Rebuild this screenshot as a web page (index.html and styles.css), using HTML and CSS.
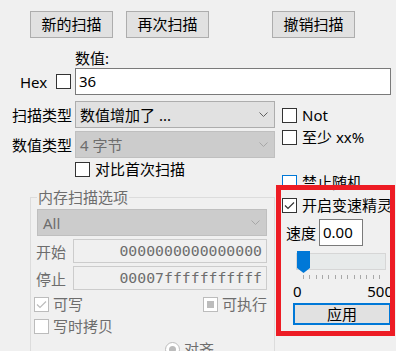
FILE: index.html
```html
<!DOCTYPE html>
<html lang="zh">

<head>
  <meta charset="UTF-8">
  <title>扫描</title>
  <link rel="stylesheet" href="styles.css">
</head>

<body>
  <div class="form">
    <div class="toolbar">
      <button class="btn">新的扫描</button>
      <button class="btn">再次扫描</button>
      <button class="btn btn-undo">撤销扫描</button>
    </div>

    <div class="value-label">数值:</div>
    <div class="value-row">
      <span class="hex-label">Hex</span>
      <span class="check"></span>
      <div class="edit value-edit">36</div>
    </div>

    <div class="columns">
      <div class="col-left">
        <div class="field-row">
          <span class="field-label">扫描类型</span>
          <div class="combo">
            <span>数值增加了 ...</span>
            <svg class="arrow" width="9" height="5" viewBox="0 0 9 5"><polyline points="0.5,0.5 4.5,4.5 8.5,0.5" /></svg>
          </div>
        </div>
        <div class="field-row">
          <span class="field-label">数值类型</span>
          <div class="combo disabled">
            <span>4 字节</span>
            <svg class="arrow" width="9" height="5" viewBox="0 0 9 5"><polyline points="0.5,0.5 4.5,4.5 8.5,0.5" /></svg>
          </div>
        </div>
        <div class="cb first-scan"><span class="check"></span>对比首次扫描</div>

        <fieldset class="group">
          <legend>内存扫描选项</legend>
          <div class="combo disabled combo-all">
            <span>All</span>
            <svg class="arrow" width="9" height="5" viewBox="0 0 9 5"><polyline points="0.5,0.5 4.5,4.5 8.5,0.5" /></svg>
          </div>
          <div class="addr-row">
            <span class="addr-label">开始</span>
            <div class="addr-edit">0000000000000000</div>
          </div>
          <div class="addr-row">
            <span class="addr-label">停止</span>
            <div class="addr-edit">00007fffffffffff</div>
          </div>
          <div class="opt-row">
            <div class="cb off cb-wide">
              <span class="check">
                <svg width="13" height="13" viewBox="0 0 13 13"><polyline points="2,6.5 5,9.5 11,3.5" /></svg>
              </span>可写
            </div>
            <div class="cb off"><span class="check mixed"></span>可执行</div>
          </div>
          <div class="opt-row">
            <div class="cb off"><span class="check"></span>写时拷贝</div>
          </div>
          <div class="radio-row"><span class="radio"></span>对齐</div>
        </fieldset>
      </div>

      <div class="col-right">
        <div class="cb opt-not"><span class="check"></span>Not</div>
        <div class="cb opt-least"><span class="check"></span>至少 xx%</div>
        <div class="cb opt-random"><span class="check hot"></span>禁止随机</div>
        <div class="cb opt-speed">
          <span class="check">
            <svg width="13" height="13" viewBox="0 0 13 13"><polyline points="2,6.5 5,9.5 11,3.5" /></svg>
          </span>开启变速精灵
        </div>
        <div class="speed-row">
          <span>速度</span>
          <div class="edit speed-edit">0.00</div>
        </div>
        <svg class="slider" width="92" height="28" viewBox="0 0 92 28">
          <rect x="0.5" y="2.5" width="89" height="16" fill="#e7eaea" stroke="#d6d6d6" />
          <path d="M1 0H14V17L7.5 22L1 17Z" fill="#0078d7" />
          <path d="M7.5 24v4M13.5 24v4M20.5 24v4M26.5 24v4M32.5 24v4M39.5 24v4M45.5 24v4M51.5 24v4M58.5 24v4M64.5 24v4M70.5 24v4M77.5 24v4M83.5 24v4" stroke="#a8a8a8" />
        </svg>
        <div class="scale"><span>0</span><span>500</span></div>
        <button class="btn btn-apply">应用</button>
      </div>
    </div>

    <!-- 标注框 -->
    <div class="highlight"></div>
  </div>
</body>

</html>
```

FILE: styles.css
```css
* {
  box-sizing: border-box;
}

body {
  margin: 0;
  width: 396px;
  height: 351px;
  overflow: hidden;
  background-color: #f0f0f0;
  font-family: "Noto Sans", "Noto Sans CJK SC", sans-serif;
  font-size: 15px;
  color: #000;
}

.form {
  position: relative;
  height: 351px;
}

.toolbar {
  display: flex;
  gap: 13px;
  padding: 11px 0 0 30px;
}

.btn {
  width: 83px;
  height: 27px;
  padding: 0;
  border: 1px solid #adadad;
  background-color: #e1e1e1;
  font: inherit;
  color: #000;
  line-height: 23px;
}

.btn-undo {
  margin-left: 50px;
}

.value-label {
  margin: 11px 0 0 75px;
  height: 19px;
  line-height: 19px;
}

.value-row {
  display: flex;
  align-items: center;
  height: 27px;
  padding-left: 20px;
}

.hex-label {
  width: 36px;
}

.check {
  position: relative;
  flex-shrink: 0;
  width: 15px;
  height: 15px;
  border: 1px solid #333;
  background-color: #fff;
}

.check svg {
  display: block;
}

.check polyline {
  fill: none;
  stroke: #333;
  stroke-width: 1.2;
}

.check.hot {
  border-color: #0078d7;
}

.edit {
  height: 27px;
  border: 1px solid #7a7a7a;
  background-color: #fff;
  padding-left: 3px;
  line-height: 24px;
}

.value-edit {
  width: 316px;
  margin-left: 4px;
}

.columns {
  display: flex;
  margin-top: 6px;
}

.col-left {
  width: 282px;
  flex-shrink: 0;
}

.field-row {
  display: flex;
  align-items: center;
  height: 27px;
  margin-bottom: 3px;
}

.field-label {
  width: 75px;
  padding-right: 3px;
  text-align: right;
}

.combo {
  display: flex;
  align-items: center;
  justify-content: space-between;
  width: 200px;
  height: 27px;
  padding: 0 6px 0 4px;
  border: 1px solid #adadad;
  background-color: #e1e1e1;
}

.combo .arrow polyline {
  fill: none;
  stroke: #606060;
}

.combo.disabled {
  background-color: #cccccc;
  border-color: #bfbfbf;
  color: #6d6d6d;
}

.combo.disabled .arrow polyline {
  stroke: #a6a6a6;
}

.cb {
  display: flex;
  align-items: center;
  gap: 5px;
  height: 15px;
  line-height: 15px;
  white-space: nowrap;
}

.cb.off {
  gap: 4px;
  color: #6d6d6d;
}

.cb.off .check {
  border-color: #bcbcbc;
}

.cb.off polyline {
  stroke: #bcbcbc;
}

.check.mixed::after {
  content: "";
  position: absolute;
  top: 3px;
  left: 3px;
  width: 7px;
  height: 7px;
  background-color: #bcbcbc;
}

.first-scan {
  margin: 4px 0 0 75px;
}

.group {
  width: 245px;
  min-width: 0;
  margin: 12px 0 0 30px;
  padding: 0 7px 0 3px;
  border: 1px solid #dcdcdc;
}

.group legend {
  margin-left: 3px;
  padding: 0 1px;
  line-height: 16px;
  color: #6d6d6d;
}

.combo-all {
  width: 230px;
  margin: 4px 0 0 3px;
  padding-left: 5px;
}

.addr-row {
  display: flex;
  align-items: center;
  height: 24px;
  margin-top: 3px;
}

.addr-label {
  width: 39px;
  padding-left: 2px;
  color: #6d6d6d;
}

.addr-edit {
  width: 194px;
  height: 24px;
  padding-right: 4px;
  border: 1px solid #cccccc;
  text-align: right;
  font-family: "DejaVu Sans Mono", monospace;
  font-size: 14.8px;
  line-height: 22px;
  color: #6d6d6d;
}

.opt-row {
  display: flex;
  margin-top: 7px;
}

.cb-wide {
  width: 169px;
}

.radio-row {
  display: flex;
  align-items: center;
  gap: 4px;
  height: 15px;
  margin: 8px 0 0 131px;
  line-height: 15px;
  color: #6d6d6d;
}

.radio {
  position: relative;
  width: 15px;
  height: 15px;
  border: 1px solid #bcbcbc;
  border-radius: 50%;
  background-color: #fff;
}

.radio::after {
  content: "";
  position: absolute;
  top: 3px;
  left: 3px;
  width: 7px;
  height: 7px;
  border-radius: 50%;
  background-color: #bcbcbc;
}

.col-right {
  display: flex;
  flex-direction: column;
  align-items: flex-start;
  flex-shrink: 0;
  width: 120px;
}

.opt-not {
  margin-top: 7px;
}

.opt-least {
  margin-top: 7px;
}

.opt-random {
  margin-top: 30px;
}

.opt-speed {
  margin-top: 8px;
}

.speed-row {
  display: flex;
  align-items: center;
  height: 27px;
  margin-top: 6px;
  padding-left: 4px;
}

.speed-edit {
  width: 44px;
  margin-left: 3px;
}

.slider {
  display: block;
  margin: 5px 0 0 14px;
}

.scale {
  display: flex;
  justify-content: space-between;
  width: 100px;
  height: 16px;
  margin: 4px 0 0 11px;
  line-height: 16px;
}

.btn-apply {
  width: 98px;
  height: 22px;
  margin: 4px 0 0 11px;
  border: 2px solid #0078d7;
  line-height: 17px;
}

.highlight {
  position: absolute;
  left: 276px;
  top: 185px;
  width: 119px;
  height: 151px;
  border: 5px solid #ed1c24;
}
```
